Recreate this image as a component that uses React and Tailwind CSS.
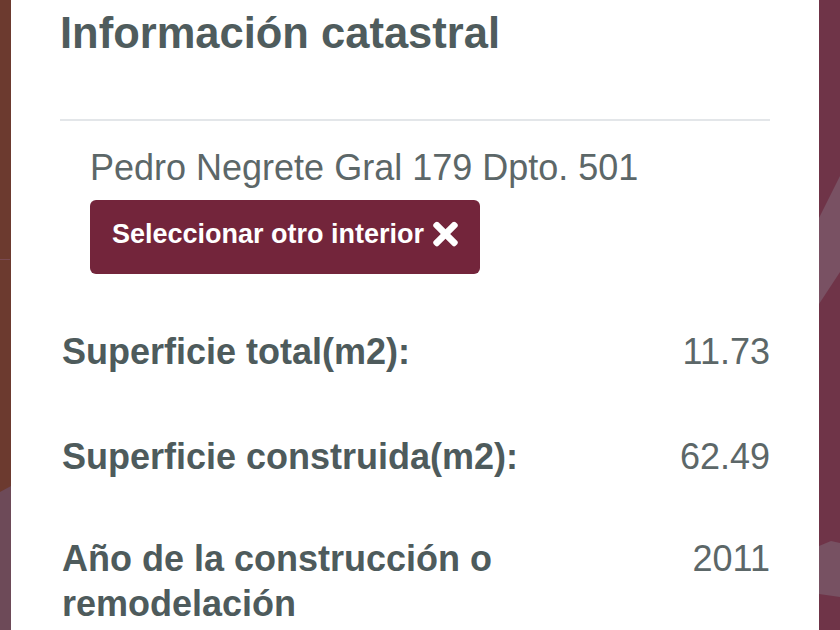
import React from "react";
import { FaTimes } from "react-icons/fa";

const rows = [
  { label: "Superficie total(m2):", value: "11.73", gap: "mt-0" },
  { label: "Superficie construida(m2):", value: "62.49", gap: "mt-[60px]" },
  { label: "Año de la construcción o remodelación", value: "2011", gap: "mt-[57px]" },
];

// map background peeking out on the left edge
const LeftEdge = () => (
  <svg className="h-full w-[11px] shrink-0" viewBox="0 0 11 630" preserveAspectRatio="none">
    <rect x="0" y="0" width="11" height="630" fill="#6c3a2f" />
    <polygon points="0,492 11,486 11,630 0,630" fill="#6d4a58" />
    <rect x="0" y="259" width="10" height="1" fill="#7a4a52" />
  </svg>
);

// map background peeking out on the right edge
const RightEdge = () => (
  <svg className="h-full w-[21px] shrink-0" viewBox="0 0 21 630" preserveAspectRatio="none">
    <rect x="0" y="0" width="21" height="630" fill="#6f3448" />
    <polygon points="21,176 0,218 0,304 21,272" fill="#795163" />
    <polygon points="0,546 12,541 21,543 21,597 0,594" fill="#775162" />
  </svg>
);

const App = () => {
  return (
    <div className="flex h-[630px] w-[840px] overflow-hidden bg-white font-['Liberation_Sans',Arial,sans-serif]">
      <LeftEdge />
      <div className="flex-1 px-[49px]">
        <h2 className="mt-[7px] text-[43.5px] leading-[52px] font-bold text-[#4f5c5d]">
          Información catastral
        </h2>
        <div className="mt-[60px] h-[2px] bg-[#e3e6e9]" />
        <div className="pl-[30px]">
          <p className="mt-[24px] text-[36px] leading-[45px] text-[#5c6768]">
            Pedro Negrete Gral 179 Dpto. 501
          </p>
          <button
            type="button"
            className="mt-[10px] flex h-[74px] items-center rounded-[6px] bg-[#73253b] pb-[6px] pl-[22px] pr-[22px] text-[27px] font-bold text-white"
          >
            Seleccionar otro interior
            <FaTimes className="ml-[9px] h-[36px] w-[25px]" />
          </button>
        </div>
        <div className="mt-[55px] flex flex-col pl-[2px]">
          {rows.map((row) => (
            <div key={row.label} className={`flex justify-between text-[36px] leading-[45px] ${row.gap}`}>
              <span className="w-[500px] font-bold text-[#4e5b5c]">{row.label}</span>
              <span className="text-[#5c6768]">{row.value}</span>
            </div>
          ))}
        </div>
      </div>
      <RightEdge />
    </div>
  );
};

export default App;
